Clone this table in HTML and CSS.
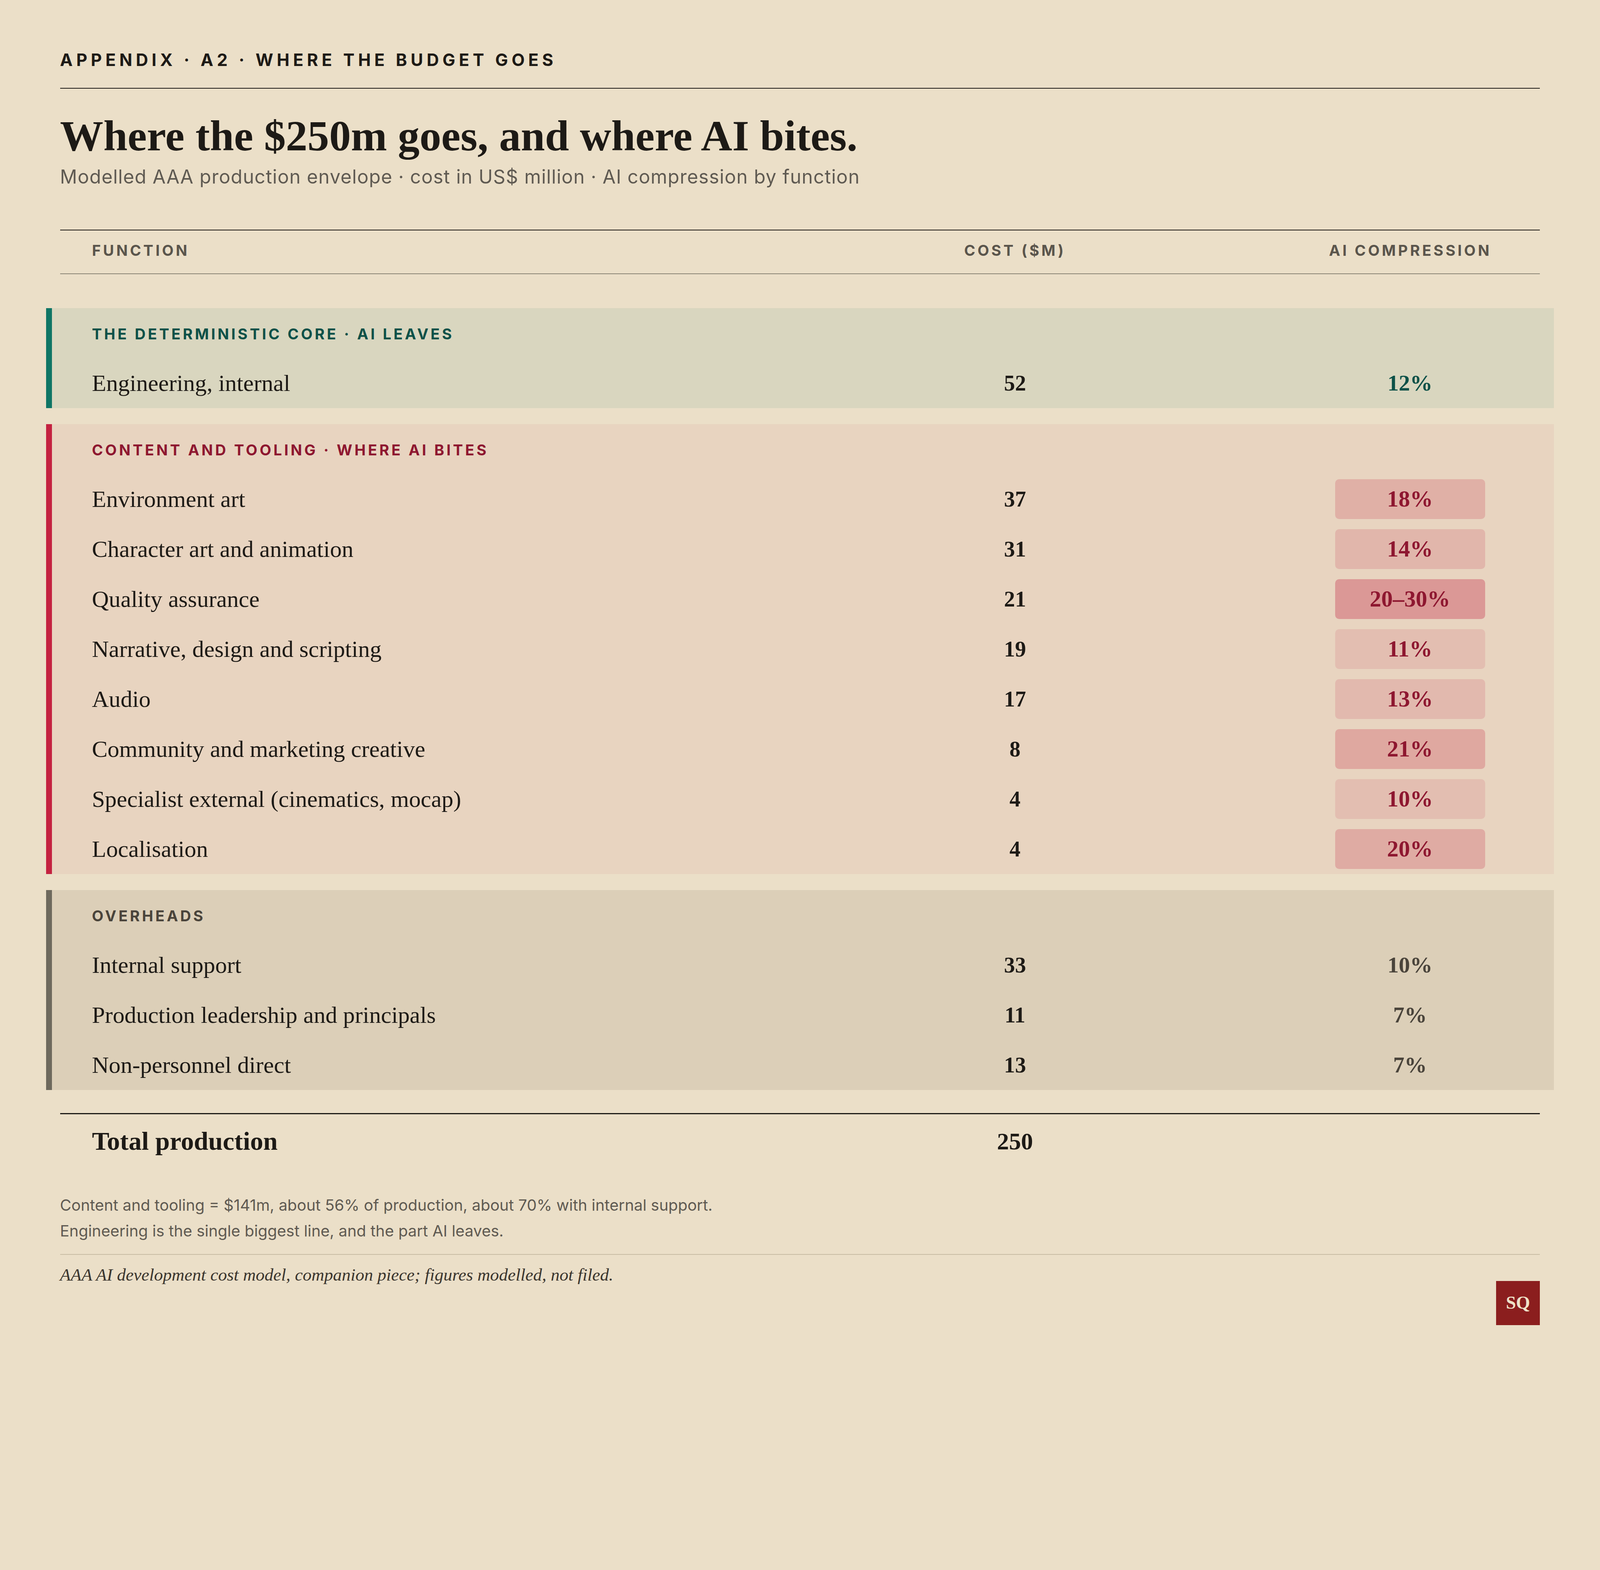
FILE: index.html
```html
<!DOCTYPE html>
<html lang="en">
<head>
<meta charset="utf-8">
<title>Where the $250m goes</title>
<link rel="stylesheet" href="styles.css">
</head>
<body>
<main class="page">
  <header class="masthead">
    <div class="eyebrow">APPENDIX · A2 · WHERE THE BUDGET GOES</div>
  </header>
  <h1 class="title">Where the $250m goes, and where AI bites.</h1>
  <p class="subtitle">Modelled AAA production envelope · cost in US$ million · AI compression by function</p>

  <section class="table">
    <div class="head grid">
      <span class="col-fn">FUNCTION</span>
      <span class="col-cost">COST ($M)</span>
      <span class="col-ai"><span class="ai-box">AI COMPRESSION</span></span>
    </div>

    <div class="groups">
      <div class="group group-core">
        <div class="group-label">THE DETERMINISTIC CORE · AI LEAVES</div>
        <div class="row grid">
          <span class="col-fn">Engineering, internal</span>
          <span class="col-cost num">52</span>
          <span class="col-ai"><span class="ai-box pct">12%</span></span>
        </div>
      </div>

      <div class="group group-content">
        <div class="group-label">CONTENT AND TOOLING · WHERE AI BITES</div>
        <div class="row grid">
          <span class="col-fn">Environment art</span>
          <span class="col-cost num">37</span>
          <span class="col-ai"><span class="ai-box pill" style="background:#e0b0a6">18%</span></span>
        </div>
        <div class="row grid">
          <span class="col-fn">Character art and animation</span>
          <span class="col-cost num">31</span>
          <span class="col-ai"><span class="ai-box pill" style="background:#e1b6ab">14%</span></span>
        </div>
        <div class="row grid">
          <span class="col-fn">Quality assurance</span>
          <span class="col-cost num">21</span>
          <span class="col-ai"><span class="ai-box pill" style="background:#db9896">20–30%</span></span>
        </div>
        <div class="row grid">
          <span class="col-fn">Narrative, design and scripting</span>
          <span class="col-cost num">19</span>
          <span class="col-ai"><span class="ai-box pill" style="background:#e3beb1">11%</span></span>
        </div>
        <div class="row grid">
          <span class="col-fn">Audio</span>
          <span class="col-cost num">17</span>
          <span class="col-ai"><span class="ai-box pill" style="background:#e2b9ae">13%</span></span>
        </div>
        <div class="row grid">
          <span class="col-fn">Community and marketing creative</span>
          <span class="col-cost num">8</span>
          <span class="col-ai"><span class="ai-box pill" style="background:#dfa8a0">21%</span></span>
        </div>
        <div class="row grid">
          <span class="col-fn">Specialist external (cinematics, mocap)</span>
          <span class="col-cost num">4</span>
          <span class="col-ai"><span class="ai-box pill" style="background:#e3beb1">10%</span></span>
        </div>
        <div class="row grid">
          <span class="col-fn">Localisation</span>
          <span class="col-cost num">4</span>
          <span class="col-ai"><span class="ai-box pill" style="background:#dfaba3">20%</span></span>
        </div>
      </div>

      <div class="group group-over">
        <div class="group-label">OVERHEADS</div>
        <div class="row grid">
          <span class="col-fn">Internal support</span>
          <span class="col-cost num">33</span>
          <span class="col-ai"><span class="ai-box pct">10%</span></span>
        </div>
        <div class="row grid">
          <span class="col-fn">Production leadership and principals</span>
          <span class="col-cost num">11</span>
          <span class="col-ai"><span class="ai-box pct">7%</span></span>
        </div>
        <div class="row grid">
          <span class="col-fn">Non-personnel direct</span>
          <span class="col-cost num">13</span>
          <span class="col-ai"><span class="ai-box pct">7%</span></span>
        </div>
      </div>
    </div>

    <div class="total grid">
      <span class="col-fn">Total production</span>
      <span class="col-cost num">250</span>
      <span class="col-ai"></span>
    </div>
  </section>

  <div class="notes">
    <p>Content and tooling = $141m, about 56% of production, about 70% with internal support.</p>
    <p>Engineering is the single biggest line, and the part AI leaves.</p>
  </div>

  <footer class="footer">
    <p class="source">AAA AI development cost model, companion piece; figures modelled, not filed.</p>
    <div class="badge">SQ</div>
  </footer>
</main>
</body>
</html>
```

FILE: styles.css
```css
/* 1rem = 10 design px; the design is 1600 px wide and fills the window */
html {
  font-size: 0.625vw;
}

body {
  margin: 0;
  background: #ebdfc8;
  color: #1d1a16;
  font-family: Inter, "Liberation Sans", sans-serif;
}

.page {
  padding: 5rem 6rem 1.4rem;
}

.masthead {
  padding-bottom: 1.8rem;
  border-bottom: 0.1rem solid #1d1a16;
}

.eyebrow {
  font-size: 1.7rem;
  line-height: 2rem;
  font-weight: 700;
  letter-spacing: 0.21em;
  color: #1d1a16;
}

.title {
  margin: 2.2rem 0 0;
  font-family: "Liberation Serif", serif;
  font-weight: 700;
  font-size: 4.34rem;
  line-height: 5rem;
  color: #1d1a16;
}

.subtitle {
  margin: 0.4rem 0 0;
  font-size: 1.9rem;
  line-height: 2.4rem;
  letter-spacing: 0.045rem;
  color: #5f5a52;
}

.table {
  margin-top: 4.1rem;
}

.grid {
  display: grid;
  grid-template-columns: minmax(0, 1fr) 15rem 39.5rem;
  align-items: center;
}

.col-cost {
  text-align: center;
}

.col-ai {
  display: flex;
  justify-content: flex-end;
}

.ai-box {
  width: 15rem;
  text-align: center;
}

.head {
  border-top: 0.1rem solid #1d1a16;
  border-bottom: 0.1rem solid #8a8576;
  padding: 1rem 5.5rem 1.3rem 3.2rem;
  font-size: 1.5rem;
  line-height: 2rem;
  font-weight: 700;
  letter-spacing: 0.15em;
  color: #5a554c;
}

.head .ai-box {
  white-space: nowrap;
  margin-right: 0.6rem;
}

.groups {
  margin: 3.4rem -1.4rem 0;
  display: flex;
  flex-direction: column;
  gap: 1.6rem;
}

.group {
  padding: 1.6rem 6.9rem 0 4rem;
  border-left: 0.6rem solid;
}

.group-core {
  background: #d9d6bf;
  border-left-color: #0f7565;
}

.group-content {
  background: #e8d4c0;
  border-left-color: #c42240;
}

.group-over {
  background: #dccfb8;
  border-left-color: #6e695d;
}

.group-label {
  font-size: 1.5rem;
  line-height: 2rem;
  font-weight: 700;
  letter-spacing: 0.15em;
  margin-bottom: 1.4rem;
}

.group-core .group-label {
  color: #0d5148;
}

.group-content .group-label {
  color: #8e1730;
}

.group-over .group-label {
  color: #4a443b;
}

.row {
  height: 5rem;
  font-family: "Liberation Serif", serif;
  font-size: 2.35rem;
  line-height: 5rem;
  color: #1d1a16;
}

.num {
  font-weight: 700;
  font-size: 2.2rem;
}

.pct {
  font-weight: 700;
  font-size: 2.25rem;
}

.group-core .pct {
  color: #0d5148;
}

.group-over .pct {
  color: #4a443b;
}

.pill {
  height: 4rem;
  line-height: 4rem;
  border-radius: 0.4rem;
  font-weight: 700;
  font-size: 2.3rem;
  color: #8e1730;
}

.total {
  margin-top: 2.3rem;
  border-top: 0.15rem solid #1d1a16;
  padding: 1.2rem 5.5rem 0 3.2rem;
  font-family: "Liberation Serif", serif;
  font-size: 2.6rem;
  line-height: 3rem;
  font-weight: 700;
}

.total .num {
  font-size: 2.4rem;
}

.notes {
  margin-top: 3.6rem;
  padding-bottom: 1rem;
  border-bottom: 0.1rem solid #c9bda4;
}

.notes p {
  margin: 0;
  font-size: 1.56rem;
  line-height: 2.6rem;
  color: #5f5a52;
}

.footer {
  display: flex;
  justify-content: space-between;
  align-items: flex-start;
  padding-top: 0.8rem;
}

.source {
  margin: 0;
  font-family: "Liberation Serif", serif;
  font-style: italic;
  font-size: 1.76rem;
  line-height: 2.4rem;
  color: #3a352e;
}

.badge {
  margin-top: 1.8rem;
  width: 4.4rem;
  height: 4.4rem;
  background: #8b1e1e;
  color: #efe2c9;
  font-family: "Liberation Serif", serif;
  font-weight: 700;
  font-size: 1.8rem;
  line-height: 4.4rem;
  text-align: center;
}
```
